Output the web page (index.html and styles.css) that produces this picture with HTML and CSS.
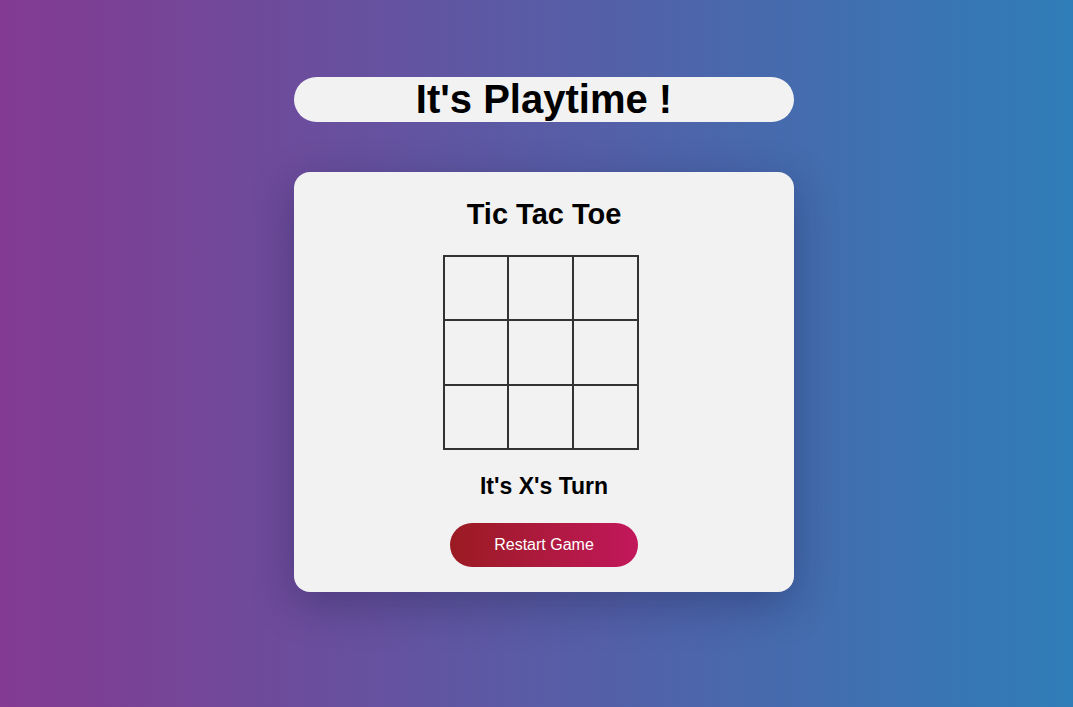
FILE: index.html
```html
<!DOCTYPE html>
<html lang="en">
<head>
<meta charset="utf-8">
<title>Tic Tac Toe</title>
<link rel="stylesheet" href="styles.css">
</head>
<body>
<main class="page">
  <h1 class="banner">It's Playtime !</h1>
  <section class="card">
    <h2 class="card-title">Tic Tac Toe</h2>
    <div class="board">
      <div class="cell"></div><div class="cell"></div><div class="cell"></div>
      <div class="cell"></div><div class="cell"></div><div class="cell"></div>
      <div class="cell"></div><div class="cell"></div><div class="cell"></div>
    </div>
    <p class="status">It's X's Turn</p>
    <button class="restart" type="button">Restart Game</button>
  </section>
</main>
</body>
</html>
```

FILE: styles.css
```css
* { box-sizing: border-box; }
html, body { margin: 0; height: 100%; }
body {
  font-family: "Liberation Sans", Arial, sans-serif;
  background: linear-gradient(to right, #833a92 0%, #2f7db8 100%);
  color: #000;
}
.page {
  display: flex;
  flex-direction: column;
  align-items: center;
  padding-top: 77px;
  padding-left: 15px;
  gap: 50px;
}
.banner {
  margin: 0;
  width: 500px;
  height: 45px;
  line-height: 45px;
  background: #f2f2f2;
  border-radius: 23px;
  text-align: center;
  font-size: 40px;
  font-weight: bold;
}
.card {
  width: 500px;
  background: #f2f2f2;
  border-radius: 16px;
  box-shadow: 0 12px 44px rgba(20, 20, 60, 0.32);
  display: flex;
  flex-direction: column;
  align-items: center;
  padding: 26px 0 25px;
}
.card-title {
  margin: 0 0 25px;
  font-size: 29px;
  line-height: 32px;
  font-weight: bold;
}
.board {
  width: 196px;
  height: 195px;
  margin-right: 7px;
  display: grid;
  grid-template-columns: repeat(3, 1fr);
  grid-template-rows: repeat(3, 1fr);
  gap: 2px;
  padding: 2px;
  background: #333;
}
.cell { background: #f2f2f2; }
.status {
  margin: 23px 0 24px;
  font-size: 23px;
  line-height: 26px;
  font-weight: bold;
}
.restart {
  width: 188px;
  height: 44px;
  border: none;
  border-radius: 22px;
  background: linear-gradient(to right, #9a1b22, #c2185b);
  color: #fff;
  font-family: "Liberation Sans", Arial, sans-serif;
  font-size: 16px;
  cursor: pointer;
}
```
